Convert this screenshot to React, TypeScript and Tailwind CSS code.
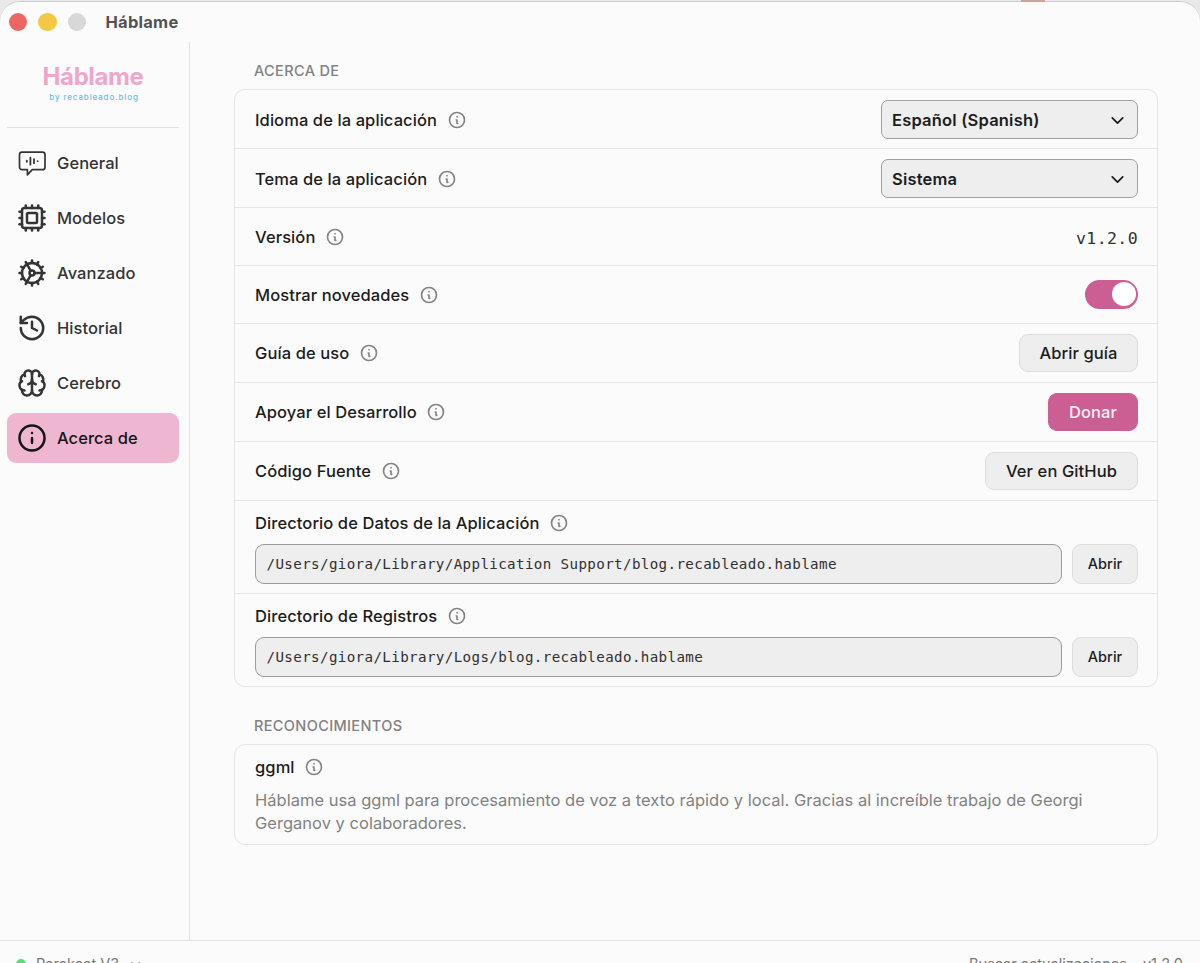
import type { ReactNode } from "react";
import { Brain, ChevronDown, Cog, Cpu, History, Info } from "lucide-react";

const InfoHint = () => (
  <svg
    className="size-5 shrink-0 text-[#848484]"
    fill="none"
    stroke="currentColor"
    viewBox="0 0 24 24"
    strokeWidth={2}
    strokeLinecap="round"
    strokeLinejoin="round"
  >
    <path d="M13 16h-1v-4h-1m1-4h.01M21 12a9 9 0 11-18 0 9 9 0 0118 0z" />
  </svg>
);

const SpeechIcon = () => (
  <svg width="30" height="30" viewBox="0 0 30 30" fill="none" stroke="currentColor" strokeLinecap="round" strokeLinejoin="round">
    <path strokeWidth="1.7" d="M5 4.1h20.500a2.500 2.500 0 0 1 2.500 2.500v12.600a2.500 2.500 0 0 1-2.500 2.500H15.200L10.400 26.900V21.700H5a2.500 2.500 0 0 1-2.500-2.500V6.600A2.500 2.500 0 0 1 5 4.100z" />
    <path strokeWidth="1.8" d="M9.800 12.600v1.200M13.400 9.700v7M17 11.200v4M20.600 13.100v.1" />
  </svg>
);

const sections = [
  { id: "general", label: "General", icon: <SpeechIcon /> },
  { id: "models", label: "Modelos", icon: <Cpu size={30} /> },
  { id: "advanced", label: "Avanzado", icon: <Cog size={30} /> },
  { id: "history", label: "Historial", icon: <History size={30} /> },
  { id: "brain", label: "Cerebro", icon: <Brain size={30} /> },
  { id: "about", label: "Acerca de", icon: <Info size={30} /> },
];

function Label({ text, className = "" }: { text: string; className?: string }) {
  return (
    <div className={`flex items-center gap-[9.5px] text-[16.5px] font-medium leading-6 tracking-[0.09px] text-[#1c1c1c] ${className}`}>
      <span>{text}</span>
      <InfoHint />
    </div>
  );
}

function Row({ label, height, children }: { label: string; height: string; children: ReactNode }) {
  return (
    <div className={`flex items-center justify-between border-b border-[#e5e5e5] pl-5 pr-[19px] ${height}`}>
      <Label text={label} className="pt-px" />
      {children}
    </div>
  );
}

function Select({ value }: { value: string }) {
  return (
    <button className="flex h-[39px] w-[257px] items-center justify-between rounded-[7px] border border-[#a0a0a0] bg-[#eeeeee] pl-[10px] pr-[9px] pt-[2px] text-[16.5px] font-semibold tracking-[0.2px] text-[#1c1c1c]">
      <span>{value}</span>
      <ChevronDown size={21} strokeWidth={2} />
    </button>
  );
}

function PathRow({ label, path, last }: { label: string; path: string; last?: boolean }) {
  return (
    <div className={`h-[93px] pl-5 pr-[19px] pt-[10px] ${last ? "" : "border-b border-[#e5e5e5]"}`}>
      <Label text={label} />
      <div className="-ml-[0.5px] mt-[9px] flex gap-[10px]">
        <div className="flex h-10 flex-1 items-center rounded-[9px] border border-[#9c9c9c] bg-[#eeeeee] pl-[11px] pt-[2px] font-['DejaVu_Sans_Mono',monospace] text-[14.200px] tracking-[0.370px] text-[#303030]">
          {path}
        </div>
        <button className="h-10 w-[66px] rounded-[9px] border border-[#dddddd] bg-[#eeeeee] text-[14.500px] font-medium text-[#1c1c1c]">
          Abrir
        </button>
      </div>
    </div>
  );
}

const buttonClass = "h-[38px] rounded-[9px] border pt-[2px] text-[16.5px] font-medium tracking-[0.1px]";

export default function App() {
  return (
    <div className="h-[963px] w-[1200px] overflow-hidden bg-[#e9e9e9] pt-px font-['Inter',sans-serif]">
      <div className="relative flex h-[980px] flex-col rounded-t-[20px] border-t border-[#cccccc] bg-[#fbfbfb]">
        <div className="absolute -top-[2px] left-[1021px] h-[2px] w-6 bg-[#d4a09f]" />

        <header className="flex h-10 shrink-0 items-center pl-[8.500px]">
          <div className="flex gap-[11px]">
            <span className="size-[18.5px] rounded-full bg-[#ee6664]" />
            <span className="size-[18.5px] rounded-full bg-[#f4c843]" />
            <span className="size-[18.5px] rounded-full bg-[#d8d8d8]" />
          </div>
          <h1 className="ml-[19.500px] text-[16.5px] font-bold tracking-[0.25px] text-[#525252]">Háblame</h1>
        </header>

        <div className="flex h-[898px] shrink-0">
          <aside className="w-[190px] border-r border-[#e2e2e2] pl-[7px] pr-[10px]">
            <div className="flex h-[86px] flex-col items-center border-b border-[#e2e2e2] pt-[22px]">
              <div className="text-[24px] font-bold leading-[26px] tracking-[-0.400px] text-[#eea6ca]">Háblame</div>
              <div className="mt-[2px] pl-[2px] text-[8px] font-medium leading-[10px] tracking-[0.880px] text-[#6fbfd8]">by recableado.blog</div>
            </div>
            <nav className="mt-[10px] flex flex-col gap-[5px]">
              {sections.map((section) => (
                <a
                  key={section.id}
                  className={`flex h-[50px] items-center gap-[10px] rounded-[9px] pl-[10px] text-[16.5px] font-medium tracking-[0.05px] ${
                    section.id === "about" ? "bg-[#efb6d2] text-[#151515]" : "text-[#343434]"
                  }`}
                >
                  {section.icon}
                  <span className="whitespace-nowrap pt-px">{section.label}</span>
                </a>
              ))}
            </nav>
          </aside>

          <main className="flex-1 pl-[44px] pr-[42px] pt-[19px]">
            <h2 className="pl-5 text-[14.500px] font-medium leading-5 tracking-[0.360px] text-[#828282]">ACERCA DE</h2>
            <section className="mt-[8px] h-[598px] rounded-[11px] border border-[#e5e5e5]">
              <Row label="Idioma de la aplicación" height="h-[59px]">
                <Select value="Español (Spanish)" />
              </Row>
              <Row label="Tema de la aplicación" height="h-[59px]">
                <Select value="Sistema" />
              </Row>
              <Row label="Versión" height="h-[57.500px]">
                <span className="pt-[7px] font-['DejaVu_Sans_Mono',monospace] text-[16.500px] tracking-[0.400px] text-[#303030]">v1.2.0</span>
              </Row>
              <Row label="Mostrar novedades" height="h-[58px]">
                <div className="flex h-[29px] w-[53px] items-center justify-end rounded-full bg-[#cb5f93] pr-[2px]">
                  <span className="size-6 rounded-full bg-white" />
                </div>
              </Row>
              <Row label="Guía de uso" height="h-[59px]">
                <button className={`${buttonClass} w-[119px] border-[#dddddd] bg-[#eeeeee] text-[#1c1c1c]`}>Abrir guía</button>
              </Row>
              <Row label="Apoyar el Desarrollo" height="h-[59px]">
                <button className={`${buttonClass} w-[90px] border-[#cb5f93] bg-[#cb5f93] text-[#fbeef4]`}>Donar</button>
              </Row>
              <Row label="Código Fuente" height="h-[59px]">
                <button className={`${buttonClass} w-[153px] border-[#dddddd] bg-[#eeeeee] text-[#1c1c1c]`}>Ver en GitHub</button>
              </Row>
              <PathRow label="Directorio de Datos de la Aplicación" path="/Users/giora/Library/Application Support/blog.recableado.hablame" />
              <PathRow label="Directorio de Registros" path="/Users/giora/Library/Logs/blog.recableado.hablame" last />
            </section>

            <h2 className="mt-[29px] pl-5 text-[14.500px] font-medium leading-5 tracking-[0.360px] text-[#828282]">RECONOCIMIENTOS</h2>
            <section className="mt-[8px] h-[101px] rounded-[11px] border border-[#e5e5e5] pl-5 pr-[19px] pt-[10px]">
              <Label text="ggml" />
              <p className="mt-[10px] w-[850px] text-[16.5px] leading-[23px] tracking-[0.015px] text-[#828282]">
                Háblame usa ggml para procesamiento de voz a texto rápido y local. Gracias al increíble trabajo de Georgi
                <br />
                Gerganov y colaboradores.
              </p>
            </section>
          </main>
        </div>

        <footer className="flex shrink-0 justify-between border-t border-[#e2e2e2] pl-[16px] pr-[17px] pt-[13px] text-[14.500px] leading-5 text-[#777777]">
          <div className="flex items-center">
            <span className="size-[10px] rounded-full bg-[#5fd980]" />
            <span className="ml-[10px]">Parakeet V3</span>
            <ChevronDown className="ml-[9px]" size={15} />
          </div>
          <div className="flex gap-4">
            <span>Buscar actualizaciones</span>
            <span>v1.2.0</span>
          </div>
        </footer>
      </div>
    </div>
  );
}
